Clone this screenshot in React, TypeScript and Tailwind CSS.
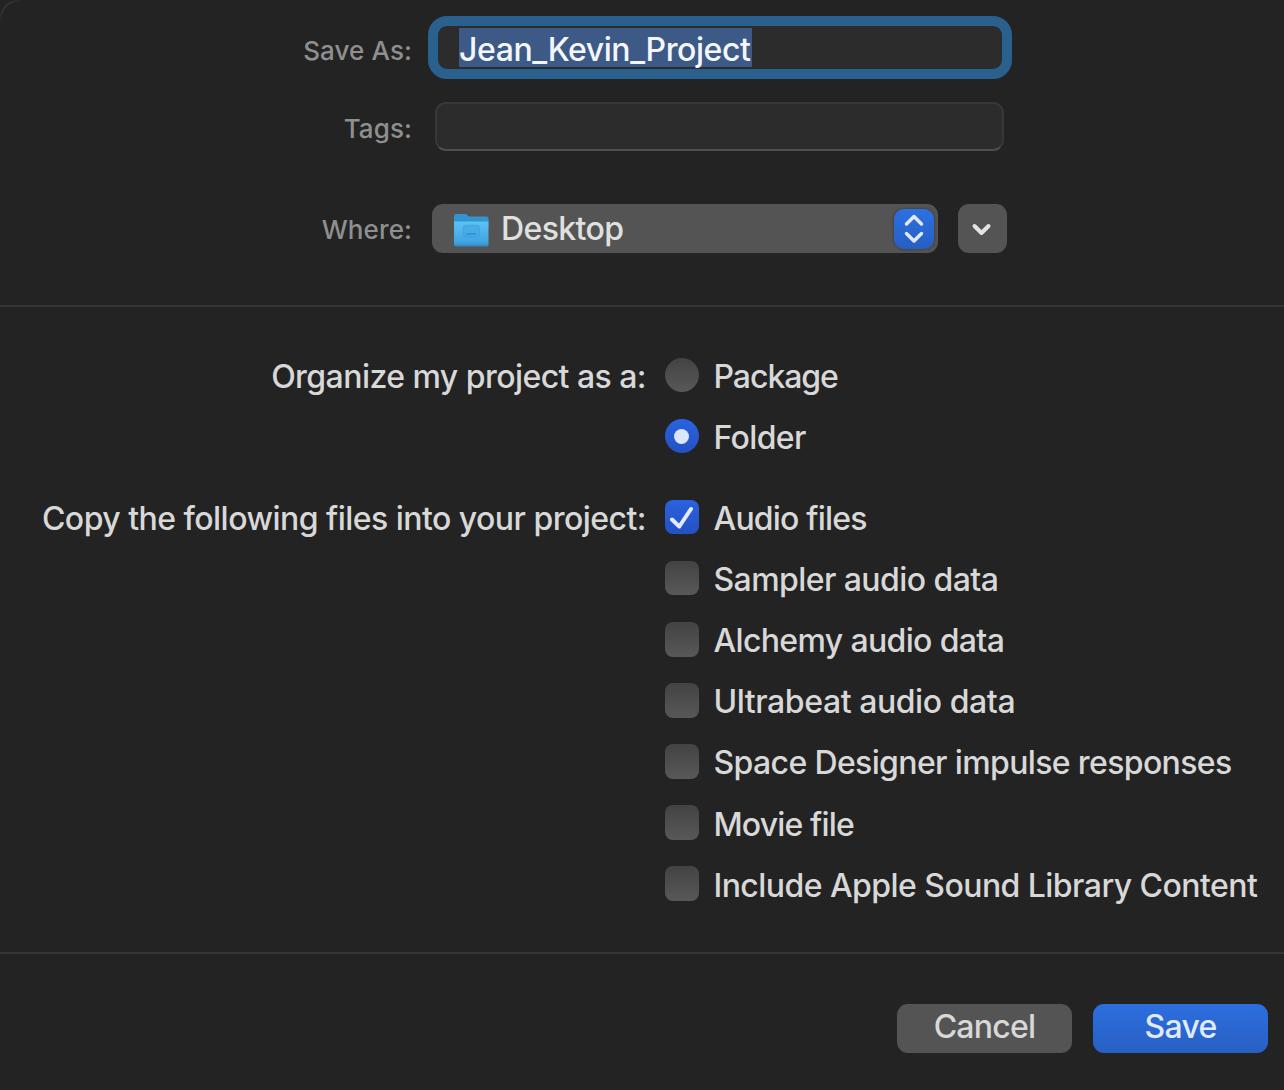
import { ReactNode } from "react";

const fileOptions = [
  { label: "Audio files", checked: true, text: "tracking-[-0.8px]" },
  { label: "Sampler audio data", checked: false, text: "tracking-[-0.57px]" },
  { label: "Alchemy audio data", checked: false, text: "tracking-[-0.65px]" },
  { label: "Ultrabeat audio data", checked: false, text: "tracking-[-0.43px]" },
  { label: "Space Designer impulse responses", checked: false, text: "tracking-[-0.63px]" },
  { label: "Movie file", checked: false, text: "tracking-[-0.85px]" },
  { label: "Include Apple Sound Library Content", checked: false, text: "tracking-[-0.55px]" },
];

function FieldLabel({ children }: { children: ReactNode }) {
  return (
    <div className="w-[412px] shrink-0 text-right text-[26px] leading-8 font-medium tracking-[0.1px] text-[#8f8f8f]">
      {children}
    </div>
  );
}

function FolderIcon() {
  return (
    <svg width="37" height="35" viewBox="0 0 37 35" className="mt-[3px] shrink-0">
      <defs>
        <linearGradient id="folder-front" x1="0" y1="0" x2="0" y2="1">
          <stop offset="0" stopColor="#5cc3f5" />
          <stop offset="0.85" stopColor="#3fa3e0" />
          <stop offset="1" stopColor="#2f86c4" />
        </linearGradient>
      </defs>
      <path d="M1 3q0-2 2-2h9q1.500 0 2.500 1.200t2.500 1.300h16.500q2 0 2 2v8H1z" fill="#3294cf" />
      <path d="M1 8.500h34.500v23q0 2-2 2H3q-2 0-2-2z" fill="url(#folder-front)" />
      <rect x="10.500" y="12.500" width="15.500" height="11.500" rx="3" fill="#46aae4" stroke="#3d9fd9" strokeWidth="1.500" opacity="0.700" />
      <path d="M13.500 21h9.500" stroke="#3693cd" strokeWidth="2" />
    </svg>
  );
}

function Radio({ label, selected, text }: { label: string; selected: boolean; text: string }) {
  return (
    <div className="flex h-[61px] items-center gap-[14.500px]" role="radio" aria-checked={selected}>
      {selected ? (
        <span className="mb-px flex size-[34.500px] items-center justify-center rounded-full bg-linear-to-b from-[#2a62e0] to-[#2451c4]">
          <span className="size-[15px] rounded-full bg-[#dce6fb]" />
        </span>
      ) : (
        <span className="mb-px size-[34.500px] rounded-full bg-linear-to-b from-[#434343] to-[#585858]" />
      )}
      <span className={"pt-[3px] leading-9 " + text}>{label}</span>
    </div>
  );
}

function Checkbox({ label, checked, text }: { label: string; checked: boolean; text: string }) {
  return (
    <div className="flex h-[61.120px] items-center gap-[14.500px]" role="checkbox" aria-checked={checked}>
      {checked ? (
        <span className="mb-px size-[34.500px] rounded-[8px] bg-linear-to-b from-[#2a62e0] to-[#2451c4]">
          <svg width="34" height="34" viewBox="0 0 34 34">
            <path d="M7 19.500 14.300 26.500 26 9" fill="none" stroke="#e2ebfc" strokeWidth="4" strokeLinecap="round" strokeLinejoin="round" />
          </svg>
        </span>
      ) : (
        <span className="mb-px size-[34.500px] rounded-[8px] bg-linear-to-b from-[#434343] to-[#585858]" />
      )}
      <span className={"pt-[3px] leading-9 whitespace-nowrap " + text}>{label}</span>
    </div>
  );
}

export default function App() {
  return (
    <div className="relative flex h-[1090px] w-[1284px] flex-col overflow-hidden bg-[#232323] font-['Inter',sans-serif] text-[32px] font-medium text-[#d8d8d8]">
      <div className="absolute top-0 left-0 size-5 rounded-tl-[18px] border-t-2 border-l-2 border-[#3a3a3a] mask-linear-135 mask-linear-from-20% mask-linear-to-60%" />
      <section className="h-[307px] shrink-0 border-b-2 border-[#353535] pt-4">
        <div className="flex h-[63px] items-center">
          <div className="pt-[6px]"><FieldLabel>Save As:</FieldLabel></div>
          <div className="ml-4 flex h-[63px] w-[584px] items-center rounded-[19px] border-[10px] border-[#29608d] bg-[#2c2c2c] pl-[21px]">
            <span className="flex h-[39px] w-[293px] items-center bg-[#3d5a86] pt-[4px] whitespace-nowrap text-[#f4f6fa] tracking-[-0.430px]">
              Jean_Kevin_Project
            </span>
          </div>
        </div>
        <div className="mt-[23px] flex h-[49px] items-center">
          <div className="pt-[5px]"><FieldLabel>Tags:</FieldLabel></div>
          <div className="ml-[23px] h-[49px] w-[569px] rounded-[11px] border-2 border-[#383838] border-b-[#4e4e4e] bg-[#2c2c2c]" />
        </div>
        <div className="mt-[53px] flex h-[49px] items-center">
          <div className="pt-[2px]"><FieldLabel>Where:</FieldLabel></div>
          <div className="ml-5 flex h-[49px] w-[506px] items-center rounded-[11px] bg-[#545454] pr-1 pl-[21px]">
            <FolderIcon />
            <span className="ml-[11px] tracking-[-0.600px] text-[#e0e0e0]">Desktop</span>
            <span className="ml-auto flex size-10 items-center justify-center rounded-[10px] bg-linear-to-b from-[#2d70e2] to-[#265fc2] shadow-[0_0_3px_#333]">
              <svg width="40" height="40" viewBox="0 0 40 40" fill="none" stroke="#dfe9fb" strokeWidth="3.500" strokeLinecap="round" strokeLinejoin="round">
                <path d="M12.500 15 20 7.500 27.500 15M12.500 24.500 20 32 27.500 24.500" />
              </svg>
            </span>
          </div>
          <div className="ml-5 flex size-[49px] items-center justify-center rounded-[11px] bg-[#545454]">
            <svg width="49" height="49" viewBox="0 0 49 49" fill="none" stroke="#e4e4e4" strokeWidth="4" strokeLinecap="round" strokeLinejoin="round">
              <path d="M16.500 22 23.500 29 30.500 22" />
            </svg>
          </div>
        </div>
      </section>

      <section className="h-[647px] shrink-0 border-b-2 border-[#353535] pt-[38px]">
        <div className="flex gap-[18.500px]">
          <div className="flex h-[61px] w-[646px] items-center justify-end pt-[3px]">
            <span className="leading-9 whitespace-nowrap tracking-[-0.550px]">Organize my project as a:</span>
          </div>
          <div role="radiogroup">
            <Radio label="Package" selected={false} text="tracking-[-1.050px]" />
            <Radio label="Folder" selected text="tracking-[-0.650px]" />
          </div>
        </div>
        <div className="mt-5 flex gap-[18.500px]">
          <div className="flex h-[61px] w-[646px] items-center justify-end pt-[3px]">
            <span className="leading-9 whitespace-nowrap tracking-[-0.530px]">Copy the following files into your project:</span>
          </div>
          <div>
            {fileOptions.map((option) => (
              <Checkbox key={option.label} {...option} />
            ))}
          </div>
        </div>
      </section>

      <footer className="flex justify-end gap-[21px] pt-[50px] pr-4 tracking-[-0.750px]">
        <button className="h-[49px] w-[175px] rounded-[11px] bg-[#545454] pb-[3px] leading-9">Cancel</button>
        <button className="h-[49px] w-[175px] rounded-[11px] bg-linear-to-b from-[#2c6ee0] to-[#2860c2] pb-[3px] leading-9 text-[#e0eafb]">Save</button>
      </footer>
    </div>
  );
}
